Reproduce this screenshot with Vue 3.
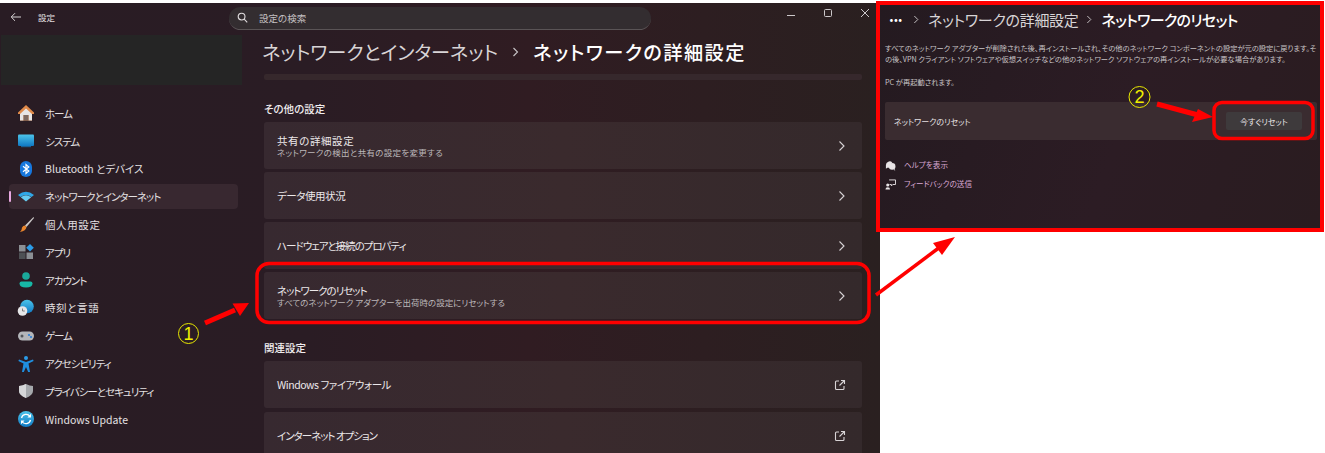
<script setup>
const gloss = '<defs><linearGradient id="g" x1="0" y1="0" x2="0" y2="1"><stop offset="0" stop-color="#4cc4ea"/><stop offset="1" stop-color="#1079c4"/></linearGradient></defs>'
const nav = [
  { label: 'ホーム', cls: 'kana', icon: '<path d="M9 1 1 8.500V10h2v6.500h12V10h2V8.500Z" fill="#e08a4a"/><path d="M3 10 9 4.500 15 10v6.500h-3.500V11h-5v5.500H3Z" fill="#e8e6e6"/><path d="M6.500 11h5v5.500h-5Z" fill="#7e6a62"/>' },
  { label: 'システム', cls: 'kana', icon: gloss + '<rect x="1" y="2.500" width="16" height="11.500" rx="1" fill="url(#g)"/><rect x="4" y="14" width="10" height="1.200" fill="#1a5f92"/>' },
  { label: 'Bluetooth とデバイス', cls: '', icon: '<rect x="3" y="1" width="12" height="16" rx="6" fill="#1677dd"/><path d="M6 6.200 11.800 11 9 13.500v-9L11.800 7 6 11.800" fill="none" stroke="#fff" stroke-width="1.200"/>' },
  { label: 'ネットワークとインターネット', cls: 'kana', active: true, icon: '<path d="M1 7Q9 .5 17 7l-2.500 2Q9 5 3.500 9Z" fill="#2fa8e8"/><path d="M3.800 9.300Q9 5.300 14.200 9.300L9 13.500Z" fill="#67cdf2"/>' },
  { label: '個人用設定', cls: 'kanji', icon: '<path d="M16.500 1 8 9.500l1.500 1.500L17 2Z" fill="#c9c6c6"/><path d="M8 9.500 9.500 11Q9 15 3 16q2-2 2-4.500 1-2 3-2Z" fill="#e8842c"/>' },
  { label: 'アプリ', cls: 'kana', icon: '<rect x="2" y="2" width="6.500" height="6.500" fill="#8b8f94"/><rect x="2" y="9.500" width="6.500" height="6.500" fill="#4d5054"/><rect x="9.500" y="9.500" width="6.500" height="6.500" fill="#8b8f94"/><path d="M13 1 16.800 4.800 13 8.600 9.200 4.800Z" fill="#2b9ce8"/>' },
  { label: 'アカウント', cls: 'kana', icon: '<circle cx="9" cy="5" r="3.800" fill="#1aa99a"/><path d="M2.500 12.500q0-2 2-2h9q2 0 2 2 0 4-6.500 4t-6.500-4Z" fill="#17b8a6"/>' },
  { label: '時刻と言語', cls: 'kanji', icon: gloss + '<circle cx="10" cy="7.500" r="6.800" fill="url(#g)"/><circle cx="5.500" cy="12" r="4.800" fill="#e6e6e8"/><path d="M5.500 9.500V12h2.300" fill="none" stroke="#666" stroke-width=".8"/>' },
  { label: 'ゲーム', cls: 'kana', icon: '<rect x="1" y="4.500" width="16" height="9" rx="4.500" fill="#b4b6ba"/><circle cx="5" cy="9" r="1.500" fill="#55585c"/><circle cx="12" cy="8" r="1.100" fill="#2b7fd8"/><circle cx="14" cy="10" r="1.100" fill="#2b7fd8"/>' },
  { label: 'アクセシビリティ', cls: 'kana', icon: '<circle cx="9" cy="3" r="2" fill="#2b9be8"/><path d="M2 4.500 9 7l7-2.500.6 1.400L11.500 8.500 13 17h-1.800L9 12l-2.200 5H5l1.500-8.500L1.400 5.900Z" fill="#1f8fe0"/>' },
  { label: 'プライバシーとセキュリティ', cls: 'kana', icon: '<path d="M9 2q4 2 7 2v5q0 4-7 7-7-3-7-7V4q3 0 7-2Z" fill="#a5a8ac"/><path d="M9 2v14q-7-3-7-7V4q3 0 7-2Z" fill="#d5d6d8"/>' },
  { label: 'Windows Update', cls: '', icon: gloss + '<circle cx="9" cy="9" r="8" fill="url(#g)"/><path d="M4.500 8A4.700 4.700 0 0 1 13 6.500M13.500 10A4.700 4.700 0 0 1 5 11.500" fill="none" stroke="#fff" stroke-width="1.300"/><path d="M14 3.800V7.500h-3.600ZM4 14.200V10.500h3.600Z" fill="#fff"/>' }
]
const cards = [
  { title: '共有の詳細設定', sub: 'ネットワークの検出と共有の設定を変更する', ls: 'kanji', sl: 'sub-wide' },
  { title: 'データ使用状況', ls: 'mix' },
  { title: 'ハードウェアと接続のプロパティ', ls: 'kana' },
  { title: 'ネットワークのリセット', sub: 'すべてのネットワーク アダプターを出荷時の設定にリセットする', ls: 'kana' }
]
const extCards = [
  { title: 'Windows ファイアウォール', ls: 'mix' },
  { title: 'インターネット オプション', ls: 'kana' }
]
</script>

<template>
  <div class="page">
    <section class="win">
      <header class="titlebar">
        <div class="tb-left">
          <svg class="back" viewBox="0 0 12 10" width="12" height="10"><path d="M11 5H1.500M5 1.200 1.200 5 5 8.800" fill="none" stroke="#d8d4d6" stroke-width="1"/></svg>
          <span class="tb-title">設定</span>
        </div>
        <div class="search">
          <svg viewBox="0 0 12 12" width="11" height="11"><circle cx="5" cy="5" r="3.700" fill="none" stroke="#e0dcde" stroke-width="1.200"/><path d="m7.800 7.800 3.400 3.400" stroke="#e0dcde" stroke-width="1.200"/></svg>
          <span>設定の検索</span>
        </div>
        <div class="winctl">
          <svg viewBox="0 0 10 10" width="10" height="10"><path d="M1 7.500h8" stroke="#ccc8ca" stroke-width="1"/></svg>
          <svg viewBox="0 0 10 10" width="10" height="10"><rect x="1.500" y="1.500" width="7" height="7" rx="1" fill="none" stroke="#ccc8ca" stroke-width="1"/></svg>
          <svg viewBox="0 0 10 10" width="10" height="10"><path d="m1 1 8 8M9 1 1 9" stroke="#ccc8ca" stroke-width="1"/></svg>
        </div>
      </header>
      <div class="body">
        <aside class="side">
          <div class="profile"></div>
          <ul class="nav">
            <li v-for="n in nav" :key="n.label" class="nav-item" :class="{ active: n.active }">
              <span v-if="n.active" class="pill"></span>
              <svg class="nav-icon" viewBox="0 0 18 18" width="18" height="18" v-html="n.icon"></svg>
              <span :class="n.cls">{{ n.label }}</span>
            </li>
          </ul>
        </aside>
        <main class="main">
          <h1 class="crumb"><span class="dim">ネットワークとインターネット</span><svg class="sep" viewBox="0 0 8 10" width="8" height="10"><path d="m1.500 1 4 4-4 4" fill="none" stroke="#c8c4c6" stroke-width="1.100"/></svg><span class="cur">ネットワークの詳細設定</span></h1>
          <div class="sliver"></div>
          <h2 class="sect">その他の設定</h2>
          <div class="list">
            <div v-for="c in cards" :key="c.title" class="card">
              <div class="card-text">
                <div class="card-title" :class="c.ls">{{ c.title }}</div>
                <div v-if="c.sub" class="card-sub" :class="c.sl">{{ c.sub }}</div>
              </div>
              <svg viewBox="0 0 8 12" width="8" height="12"><path d="m1.500 1.500 4.500 4.500-4.500 4.500" fill="none" stroke="#d8d4d6" stroke-width="1.100"/></svg>
            </div>
          </div>
          <h2 class="sect sect2">関連設定</h2>
          <div class="list list2">
            <div v-for="t in extCards" :key="t.title" class="card">
              <div class="card-title" :class="t.ls">{{ t.title }}</div>
              <svg viewBox="0 0 12 12" width="12" height="12"><path d="M5 2H2.500Q1.500 2 1.500 3v6.500q0 1 1 1H9q1 0 1-1V7M7 1.500h3.500V5M10.500 1.500 5.500 6.500" fill="none" stroke="#d8d4d6" stroke-width="1.100"/></svg>
            </div>
          </div>
        </main>
      </div>
    </section>

    <section class="panel">
      <h1 class="p-crumb">
        <span class="dots">···</span>
        <svg viewBox="0 0 8 10" width="7" height="9"><path d="m1.500 1 4 4-4 4" fill="none" stroke="#c8c4c6" stroke-width="1.100"/></svg>
        <span class="dim">ネットワークの詳細設定</span>
        <svg viewBox="0 0 8 10" width="7" height="9"><path d="m1.500 1 4 4-4 4" fill="none" stroke="#c8c4c6" stroke-width="1.100"/></svg>
        <span class="cur">ネットワークのリセット</span>
      </h1>
      <p class="desc">すべてのネットワーク アダプターが削除された後、再インストールされ、その他のネットワーク コンポーネントの設定が元の設定に戻ります。その後、VPN クライアント ソフトウェアや仮想スイッチなどの他のネットワーク ソフトウェアの再インストールが必要な場合があります。</p>
      <p class="desc restart">PC が再起動されます。</p>
      <div class="reset-row">
        <span>ネットワークのリセット</span>
        <button class="now">今すぐリセット</button>
      </div>
      <div class="links">
        <div class="link">
          <svg viewBox="0 0 12 12" width="11" height="11"><path d="M1 5.500a4 4 0 0 1 7-2.600L6 4.500 5 8.500H2.500L1 9.500Z" fill="#e8e4e6"/><circle cx="7.800" cy="7" r="3.600" fill="#e8e4e6"/><path d="M9.500 10 11 11.200" stroke="#e8e4e6"/></svg>
          <span>ヘルプを表示</span>
        </div>
        <div class="link">
          <svg viewBox="0 0 12 12" width="11" height="11"><circle cx="3" cy="6.500" r="1.700" fill="#e8e4e6"/><path d="M.5 11.500q0-2.500 2.500-2.500t2.500 2.500Z" fill="#e8e4e6"/><path d="M4.500 1h7v5h-3L7 7.500V6H5" fill="none" stroke="#e8e4e6" stroke-width="1"/></svg>
          <span>フィードバックの送信</span>
        </div>
      </div>
    </section>

    <svg class="marks" viewBox="0 0 1325 453" width="1325" height="453">
      <rect x="257" y="263.500" width="612" height="59" rx="12" fill="none" stroke="#f00" stroke-width="3.500"/>
      <rect x="1214" y="102.500" width="99" height="36" rx="8" fill="none" stroke="#f00" stroke-width="3.500"/>
      <path d="M205 323 235 310" stroke="#f00" stroke-width="5"/><path d="M249 303 232.500 303.500 240 316Z" fill="#f00"/>
      <path d="M876 295 940 247" stroke="#f00" stroke-width="3.500"/><path d="M955 237 933 243 942 255Z" fill="#f00"/>
      <path d="M1157 104 1198 115" stroke="#f00" stroke-width="5"/><path d="M1213 117 1198 109 1192 122Z" fill="#f00"/>
      <circle cx="188.500" cy="333.500" r="10" fill="none" stroke="#e8e800" stroke-width="1"/>
      <circle cx="1139.500" cy="97" r="10.500" fill="none" stroke="#e8e800" stroke-width="1"/>
      <text x="188.500" y="340" class="num">1</text>
      <text x="1139.500" y="103" class="num">2</text>
    </svg>
  </div>
</template>

<style>
html, body { background: #fff; }
</style>

<style scoped>
* { box-sizing: border-box; }
.page {
  position: relative; width: 1325px; height: 453px; overflow: hidden; background: #fff;
  display: flex; align-items: flex-start;
  font-family: "Noto Sans CJK JP", "Noto Sans", sans-serif; color: #e4e0e2;
  font-feature-settings: "palt";
}
h1, h2, p, ul { margin: 0; padding: 0; font-weight: 400; }
ul { list-style: none; }
.kana { letter-spacing: -1px; }
.mix { letter-spacing: -.45px; }
.kanji { letter-spacing: .6px; }
.win {
  width: 880px; height: 450px; margin-top: 3px; overflow: hidden; flex: none;
  background: linear-gradient(90deg, #291c24 0, #2a1c24 35%, #301c22 60%, #2a2020 100%);
}
.titlebar { height: 28px; display: flex; align-items: center; position: relative; }
.tb-left { width: 229px; display: flex; align-items: center; gap: 16px; padding-left: 10px; font-size: 8.500px; flex: none; }
.search {
  width: 422px; height: 23px; margin-top: 2px; border-radius: 12px; background: #332d30; border-bottom: 1px solid #5a5456;
  display: flex; align-items: center; gap: 11px; padding-left: 8px; font-size: 9.500px; color: #c4c0c2;
}
.winctl { margin-left: auto; display: flex; gap: 27px; padding-right: 10px; margin-top: -9px; }
.body { display: flex; }
.side { width: 243px; flex: none; padding-top: 4px; }
.profile { width: 241px; height: 50px; margin-left: 1px; background: #252525; }
.nav { margin-top: 16px; padding: 0 5px 0 9px; }
.nav-item {
  position: relative; height: 24.800px; margin-bottom: 3px; display: flex; align-items: center; gap: 10px; padding-left: 8px;
  font-size: 10.500px; border-radius: 4px;
}
.nav-item.active { background: #382830; }
.pill { position: absolute; left: 0; top: 7px; width: 2px; height: 11px; background: #e8a8e0; border-radius: 1px; }
.nav-icon { flex: none; }
.main { flex: 1; padding: 7px 18px 0 21px; min-width: 0; }
.crumb { font-size: 19.200px; line-height: 28px; height: 28px; margin-left: -2px; white-space: nowrap; display: flex; align-items: center; color: #fff; }
.crumb .dim { color: #d8d4d6; }
.crumb .cur { font-weight: 500; letter-spacing: 1.450px; }
.sep { margin: 0 13px 0 14px; }
.sliver { height: 6px; margin-top: 8px; background: #36282c; border-radius: 2px; }
.sect { font-size: 10.500px; font-weight: 500; line-height: 16px; margin-top: 21px; color: #f0ecee; }
.sect2 { margin-top: 21px; }
.list { margin-top: 5px; display: flex; flex-direction: column; gap: 3px; }
.list2 { gap: 4px; }
.card {
  height: 47px; display: flex; align-items: center; justify-content: space-between; padding: 0 16px 0 13px;
  background: linear-gradient(90deg, #372930, #3a2a2d 50%, #34292b);
  border-radius: 3px;
}
.card-title { font-size: 10.500px; line-height: 13px; color: #ece8ea; }
.card-sub { font-size: 8.500px; line-height: 11px; color: #bcb8ba; }
.sub-wide { letter-spacing: .3px; }
.panel {
  width: 448px; height: 231px; margin: 1px 0 0 -4px; position: relative; flex: none; border: 4px solid #f00;
  background: linear-gradient(110deg, #241a20, #2c1c24 55%, #2a1c20);
  padding: 1px 5px 0 5px;
}
.p-crumb { display: flex; align-items: center; gap: 8px; height: 26px; font-size: 15px; font-weight: 500; color: #fff; white-space: nowrap; padding-left: 2px; }
.p-crumb .dim { color: #d8d4d6; font-weight: 400; letter-spacing: -.3px; }
.p-crumb .cur { letter-spacing: -.7px; }
.dots { letter-spacing: -4.500px; width: 18px; font-weight: 700; }
.desc { font-size: 7.250px; line-height: 11px; color: #c8c4c6; margin-top: 11px; width: 432px; }
.restart { margin-top: 12px; }
.reset-row {
  margin-top: 14px; width: 432px; height: 38px; background: #3a2c30; border-radius: 2px;
  display: flex; align-items: center; justify-content: space-between; padding: 0 15px 0 9px; font-size: 8px;
}
.now { width: 76px; height: 18px; border: 0; border-radius: 2px; background: #3e3a3c; color: #e8e4e6; font: inherit; font-size: 8px; padding: 0; }
.links { margin-top: 19px; display: flex; flex-direction: column; gap: 7px; }
.link { display: flex; align-items: center; gap: 8px; font-size: 7.600px; color: #d8a8d4; line-height: 12px; }
.marks { position: absolute; left: 0; top: 0; pointer-events: none; }
.num { font-family: "Liberation Sans", sans-serif; font-size: 18px; fill: #f0f000; text-anchor: middle; }
</style>
